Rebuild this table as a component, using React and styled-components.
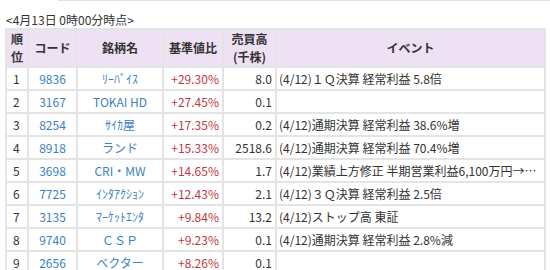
import React from "react";
import styled, { createGlobalStyle } from "styled-components";

const Global = createGlobalStyle`
  html, body { margin: 0; padding: 0; background: #fff; }
  body { font-family: "Noto Sans CJK JP", "Noto Sans", sans-serif; color: #333; }
`;

const Page = styled.div`
  width: 550px;
  height: 270px;
  overflow: hidden;
  background: #fff;
`;

const TopRule = styled.div`
  margin-left: 58px;
  height: 0;
  border-top: 1px solid #e2e2e2;
`;

const Caption = styled.div`
  padding: 11px 0 0 6px;
  height: 16px;
  font-size: 12px;
  line-height: 16px;
  color: #333;
`;

const Table = styled.table`
  margin-left: 5px;
  width: 541px;
  border-collapse: collapse;
  table-layout: fixed;
  font-size: 12px;
`;

const Th = styled.th`
  background: #eee1f3;
  border: 2px solid #e4e4e4;
  height: 36px;
  padding: 0 4px;
  font-weight: bold;
  font-size: 12px;
  line-height: 18px;
  color: #333;
  text-align: center;
`;

const Td = styled.td`
  border: 2px solid #e4e4e4;
  height: 21px;
  padding: 0 ${(p) => (p.$align === "left" ? "2px" : "3px")};
  line-height: 21px;
  text-align: ${(p) => p.$align || "center"};
  color: ${(p) => p.$color || "#333"};
  white-space: nowrap;
  overflow: hidden;
  text-overflow: ellipsis;
`;

const Rank = styled(Td)`
  text-align: left;
  padding-left: 6px;
`;

const rows = [
  ["1", "9836", "ﾘｰﾊﾞｲｽ", "+29.30%", "8.0", "(4/12)１Ｑ決算 経常利益 5.8倍"],
  ["2", "3167", "TOKAI HD", "+27.45%", "0.1", ""],
  ["3", "8254", "ｻｲｶ屋", "+17.35%", "0.2", "(4/12)通期決算 経常利益 38.6%増"],
  ["4", "8918", "ランド", "+15.33%", "2518.6", "(4/12)通期決算 経常利益 70.4%増"],
  ["5", "3698", "CRI・MW", "+14.65%", "1.7", "(4/12)業績上方修正 半期営業利益6,100万円→1.22億円"],
  ["6", "7725", "ｲﾝﾀｱｸｼｮﾝ", "+12.43%", "2.1", "(4/12)３Ｑ決算 経常利益 2.5倍"],
  ["7", "3135", "ﾏｰｹｯﾄｴﾝﾀ", "+9.84%", "13.2", "(4/12)ストップ高 東証"],
  ["8", "9740", "ＣＳＰ", "+9.23%", "0.1", "(4/12)通期決算 経常利益 2.8%減"],
  ["9", "2656", "ベクター", "+8.26%", "0.1", ""],
];

const BLUE = "#3d7fc1";
const RED = "#c0393f";

export default function App() {
  return (
    <Page>
      <Global />
      <TopRule />
      <Caption>&lt;4月13日 0時00分時点&gt;</Caption>
      <Table>
        <colgroup>
          <col style={{ width: 22 }} />
          <col style={{ width: 49 }} />
          <col style={{ width: 86 }} />
          <col style={{ width: 60 }} />
          <col style={{ width: 53 }} />
          <col />
        </colgroup>
        <thead>
          <tr>
            <Th>順<br />位</Th>
            <Th>コード</Th>
            <Th>銘柄名</Th>
            <Th>基準値比</Th>
            <Th>売買高<br />(千株)</Th>
            <Th>イベント</Th>
          </tr>
        </thead>
        <tbody>
          {rows.map((r) => (
            <tr key={r[0]}>
              <Rank>{r[0]}</Rank>
              <Td $color={BLUE}>{r[1]}</Td>
              <Td $color={BLUE}>{r[2]}</Td>
              <Td $align="right" $color={RED}>{r[3]}</Td>
              <Td $align="right">{r[4]}</Td>
              <Td $align="left">{r[5]}</Td>
            </tr>
          ))}
        </tbody>
      </Table>
    </Page>
  );
}
